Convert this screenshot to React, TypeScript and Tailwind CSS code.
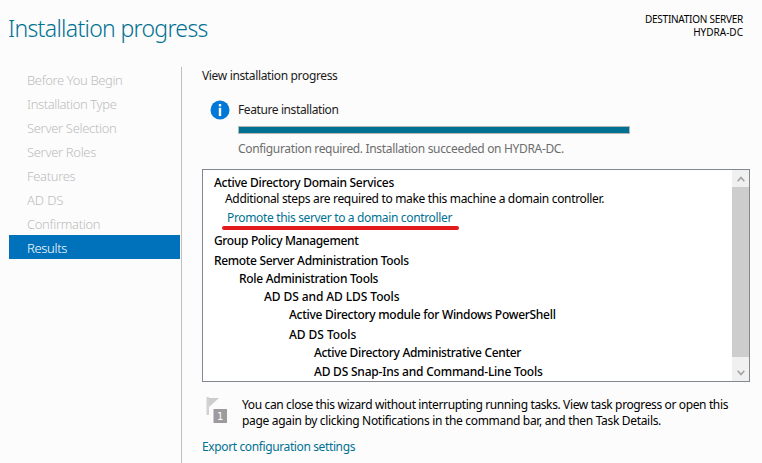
const steps = [
  { label: 'Before You Begin', spacing: 'tracking-[-0.38px]' },
  { label: 'Installation Type', spacing: 'tracking-[-0.4px]' },
  { label: 'Server Selection', spacing: 'tracking-[-0.33px]' },
  { label: 'Server Roles', spacing: 'tracking-[-0.33px]' },
  { label: 'Features', spacing: 'tracking-[-0.33px]' },
  { label: 'AD DS', spacing: 'tracking-[-0.1px]' },
  { label: 'Confirmation', spacing: 'tracking-[-0.33px]' },
  { label: 'Results', spacing: 'tracking-[-0.33px]' },
];

const tools = [
  { label: 'Group Policy Management', style: 'pl-[11px] tracking-[-0.35px]' },
  { label: 'Remote Server Administration Tools', style: 'mt-1 pl-[11px] tracking-[-0.33px]' },
  { label: 'Role Administration Tools', style: 'mt-0.5 pl-9 tracking-[-0.29px]' },
  { label: 'AD DS and AD LDS Tools', style: 'mt-0.5 pl-[61px] tracking-[-0.09px]' },
  { label: 'Active Directory module for Windows PowerShell', style: 'mt-0.5 pl-[86px] tracking-[-0.28px]' },
  { label: 'AD DS Tools', style: 'mt-1 pl-[86px] tracking-[-0.05px]' },
  { label: 'Active Directory Administrative Center', style: 'mt-0.5 pl-[111px] tracking-[-0.33px]' },
  { label: 'AD DS Snap-Ins and Command-Line Tools', style: 'mt-[3px] pl-[111px] tracking-[-0.21px]' },
];

function InfoIcon() {
  return (
    <svg className="mt-[-1px] h-5 w-5 shrink-0" viewBox="0 0 20 20">
      <circle cx="10" cy="10" r="9.5" fill="#0078d7" />
      <rect x="8.8" y="4" width="2.4" height="2.4" fill="#fff" />
      <path d="M8.8 7.8h2.4V16H8.8z" fill="#fff" />
    </svg>
  );
}

function FlagIcon() {
  return (
    <svg className="h-[26px] w-[22px] shrink-0" viewBox="0 0 22 26">
      <rect x="0.5" y="0" width="2.5" height="18" fill="#d2d2d2" />
      <path d="M3 1h10L3 10z" fill="#cdcdcd" />
      <rect x="7.5" y="12" width="13.5" height="14" fill="#9d9b9e" />
      <text x="14.2" y="22.5" textAnchor="middle" fontSize="10" fill="#fff" fontFamily="DejaVu Sans, sans-serif">1</text>
    </svg>
  );
}

function Chevron({ down = false }: { down?: boolean }) {
  return (
    <svg className="h-[6px] w-2" viewBox="0 0 8 6" fill="none" stroke="#a3a3a3" strokeWidth="1.6">
      <path d={down ? 'M.7.8 4 4.5 7.3.8' : 'M.7 5.2 4 1.5l3.3 3.7'} />
    </svg>
  );
}

export default function App() {
  return (
    <div className="flex h-[463px] w-[762px] flex-col overflow-hidden whitespace-nowrap bg-[#fcfcfc] font-['Noto_Sans','Open_Sans',sans-serif] text-[12px] leading-[16px] text-[#1b1b1b]">
      <header className="flex h-[67px] shrink-0 justify-between pl-2 pr-[19px]">
        <h1 className="pt-3 text-[23px] font-light leading-8 tracking-[-0.68px] text-[#007193]">Installation progress</h1>
        <div className="pt-[13px] text-right text-[10px] leading-[13px] text-black">
          <div className="tracking-[-0.256px]">DESTINATION SERVER</div>
          <div>HYDRA-DC</div>
        </div>
      </header>
      <div className="flex flex-1">
        <nav className="w-[181px] shrink-0 pl-[9px] pr-px text-[13px] font-light">
          {steps.map(({ label, spacing }) => (
            <div
              key={label}
              className={`flex h-6 items-center pl-[18px] pt-[2px] ${spacing} ${label === 'Results' ? 'bg-[#0072bc] text-white' : 'text-[#bdbdbd]'}`}
            >
              {label}
            </div>
          ))}
        </nav>
        <div className="w-px shrink-0 bg-[#bfbfbf]" />
        <main className="flex w-[568px] flex-col pl-5 pt-px">
          <p className="tracking-[-0.349px]">View installation progress</p>
          <div className="mt-[17px] flex pl-2">
            <InfoIcon />
            <div className="ml-2 pt-px">
              <p className="tracking-[-0.397px]">Feature installation</p>
              <div className="mt-2 h-2 w-[392px] border border-[#b5b5b5] bg-[#007193]" />
              <p className="mt-[7px] tracking-[-0.333px] text-[#6d6d6d]">Configuration required. Installation succeeded on HYDRA-DC.</p>
            </div>
          </div>
          <section className="mt-3 flex h-[213px] w-[548px] shrink-0 border border-[#828790] bg-white text-black">
            <div className="flex-1 pt-[5px]">
              <h2 className="pl-[11px] font-medium tracking-[-0.28px]">Active Directory Domain Services</h2>
              <p className="pl-[22px] tracking-[-0.332px]">Additional steps are required to make this machine a domain controller.</p>
              <div className="flex h-[26px] pl-[19px]">
                <div className="relative h-[22px] w-[237px] pl-[5px] pt-[3px]">
                  <a className="tracking-[-0.345px] text-[#007193]">Promote this server to a domain controller</a>
                  <span className="absolute bottom-[-1px] left-0 h-1 w-full rounded-full bg-[#e31b1d]" />
                </div>
              </div>
              {tools.map(({ label, style }) => (
                <div key={label} className={`font-medium ${style}`}>{label}</div>
              ))}
            </div>
            <div className="flex w-[17px] shrink-0 flex-col bg-[#f0f0f0]">
              <div className="flex h-[17px] items-center justify-center"><Chevron /></div>
              <div className="h-[170px] bg-[#cdcdcd]" />
              <div className="flex flex-1 items-center justify-center pt-2"><Chevron down /></div>
            </div>
          </section>
          <div className="mt-[15px] flex pl-1">
            <FlagIcon />
            <div className="ml-[14px] text-black">
              <p className="tracking-[-0.372px]">You can close this wizard without interrupting running tasks. View task progress or open this</p>
              <p className="tracking-[-0.315px]">page again by clicking Notifications in the command bar, and then Task Details.</p>
            </div>
          </div>
          <a className="mt-[10px] tracking-[-0.38px] text-[#007193]">Export configuration settings</a>
        </main>
      </div>
    </div>
  );
}
